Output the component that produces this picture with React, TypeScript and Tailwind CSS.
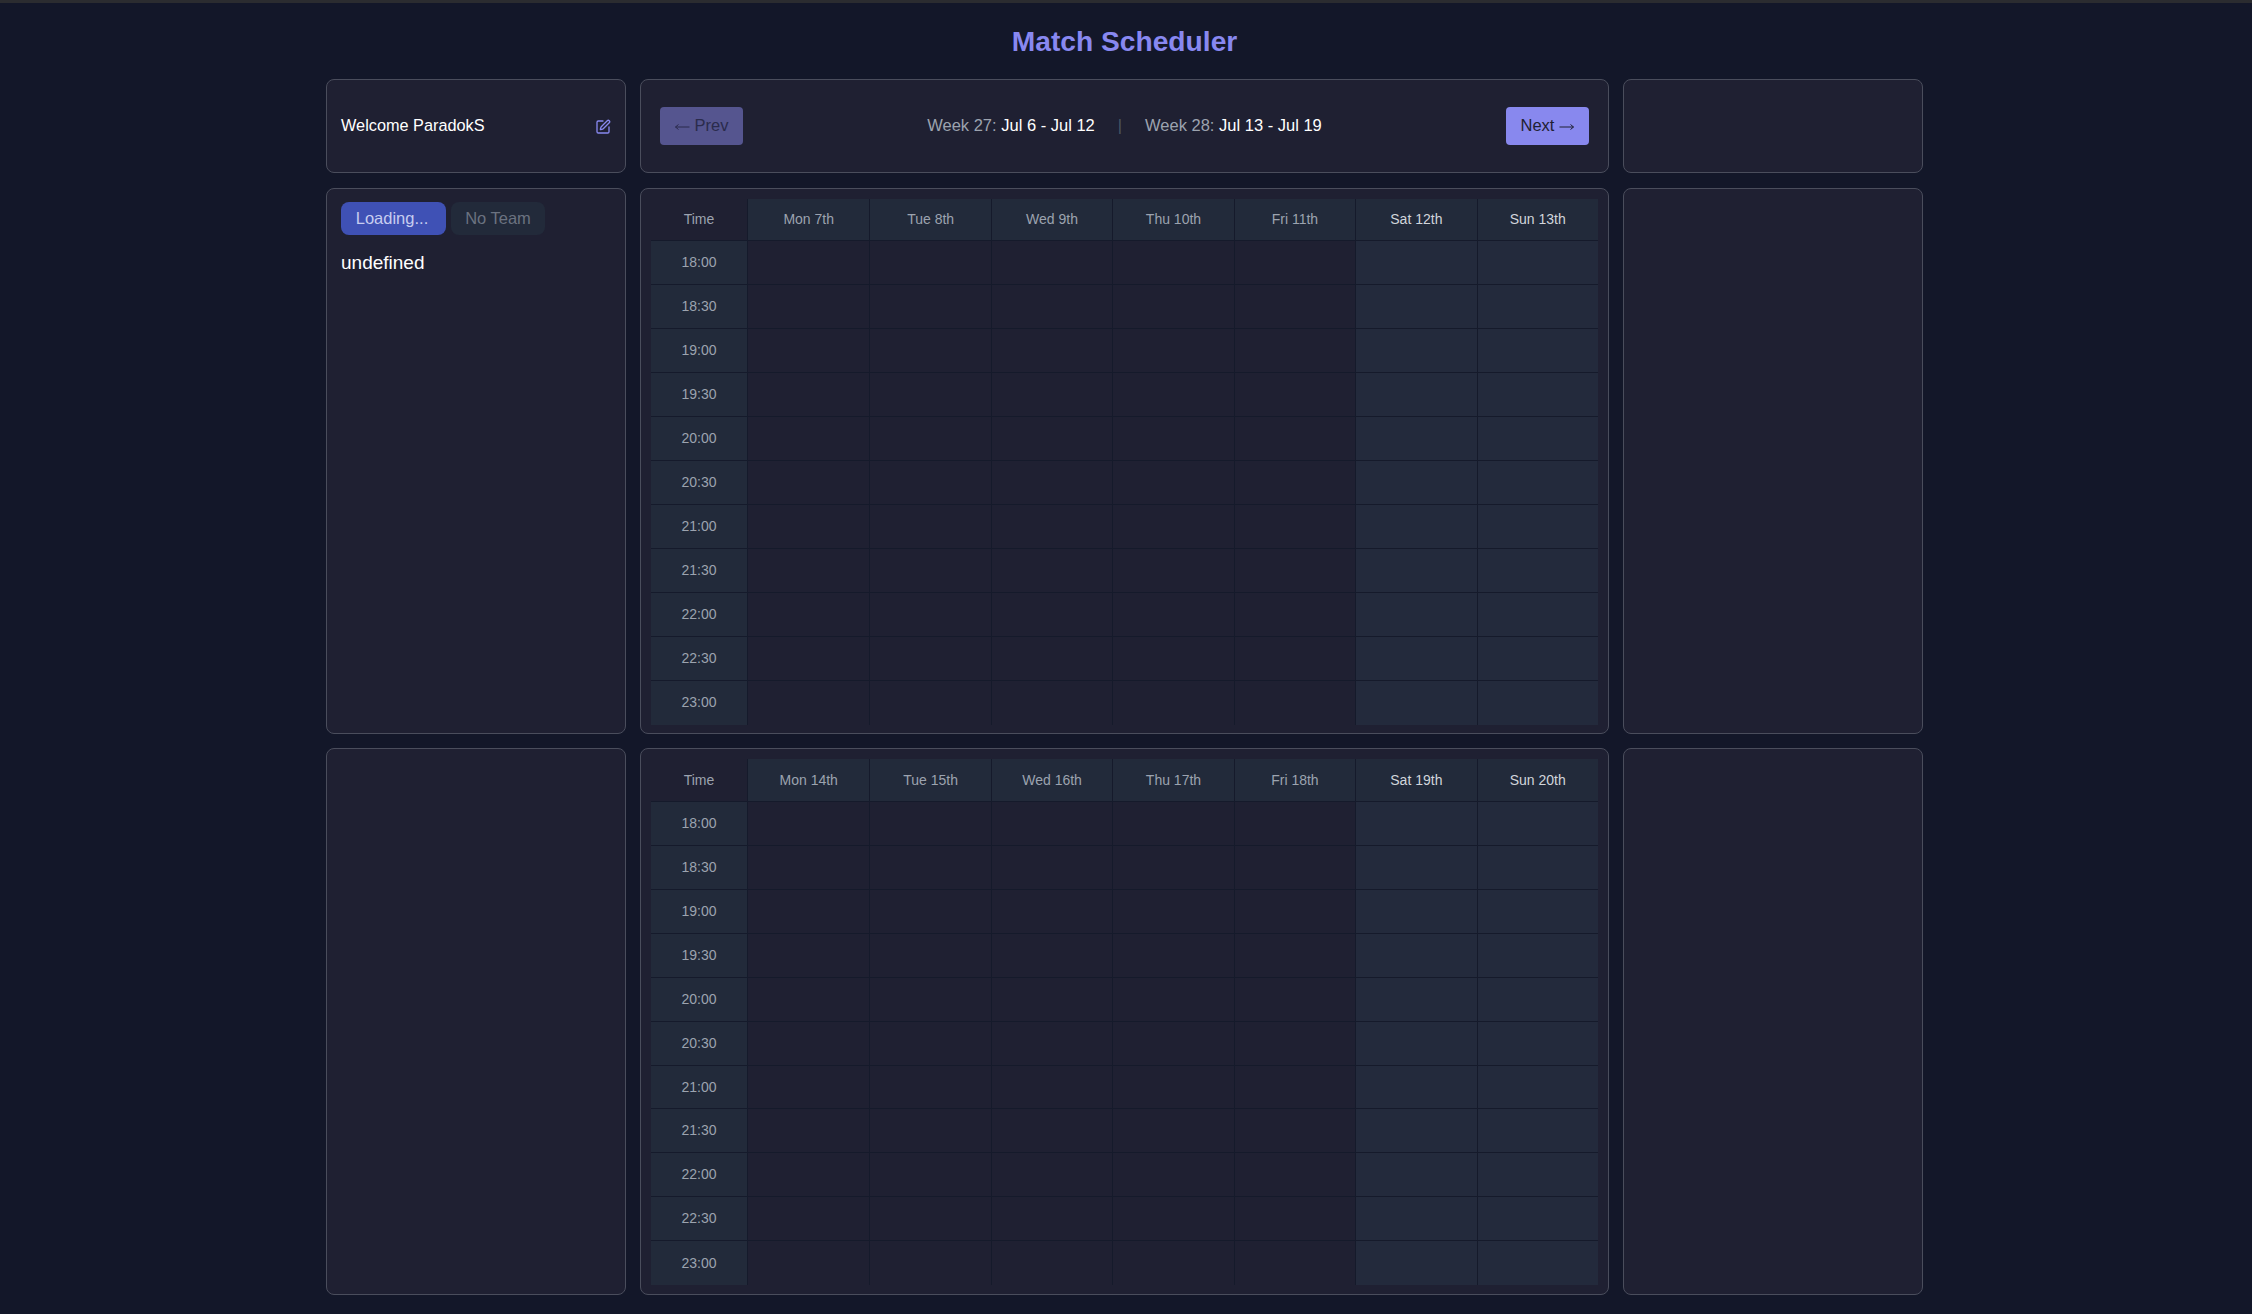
import { SquarePen } from 'lucide-react';

const TIMES = ['18:00', '18:30', '19:00', '19:30', '20:00', '20:30', '21:00', '21:30', '22:00', '22:30', '23:00'];

const WEEK_27 = ['Mon 7th', 'Tue 8th', 'Wed 9th', 'Thu 10th', 'Fri 11th', 'Sat 12th', 'Sun 13th'];
const WEEK_28 = ['Mon 14th', 'Tue 15th', 'Wed 16th', 'Thu 17th', 'Fri 18th', 'Sat 19th', 'Sun 20th'];

function Card({ className = '', children }: { className?: string; children?: React.ReactNode }) {
  return <div className={`rounded-lg border border-[#4a4d5c] bg-[#1f2032] ${className}`}>{children}</div>;
}

function WeekGrid({ days, rows }: { days: string[]; rows: string }) {
  return (
    <div className={`grid h-[526px] grid-cols-[97px_repeat(7,1fr)] text-[14px] ${rows}`}>
      <div className="flex items-center justify-center border-r border-b border-[#151a2b] text-[#9ca3af]">Time</div>
      {days.map((day, i) => (
        <div
          key={day}
          className={`flex items-center justify-center border-b border-[#151a2b] bg-[#222a3a] ${i > 0 ? 'border-l' : ''} ${
            i >= 5 ? 'text-[#d1d5db]' : 'text-[#9ca3af]'
          }`}
        >
          {day}
        </div>
      ))}
      {TIMES.map((time, row) => (
        <div key={time} className="contents">
          <div
            className={`flex items-center justify-center border-r border-[#151a2b] bg-[#222a3a] text-[#9ca3af] ${
              row < 10 ? 'border-b' : ''
            }`}
          >
            {time}
          </div>
          {days.map((day, i) => (
            <div
              key={day}
              className={`border-[#151a2b] ${i >= 5 ? 'bg-[#232a3c]' : ''} ${i > 0 ? 'border-l' : ''} ${
                row < 10 ? 'border-b' : ''
              }`}
            />
          ))}
        </div>
      ))}
    </div>
  );
}

function Arrow({ flip = false }: { flip?: boolean }) {
  return (
    <svg
      width="15"
      height="8"
      viewBox="0 0 15 8"
      fill="none"
      stroke="currentColor"
      strokeWidth="1"
      className={`mt-[3px] ${flip ? 'rotate-180' : ''}`}
    >
      <path d="M0.5 4H14.5M11.5 1.5L14.5 4L11.5 6.5" />
    </svg>
  );
}

export default function App() {
  return (
    <div className="flex min-h-[1314px] flex-col border-t-[3px] border-[#2b2c30] bg-[#131729] font-['Liberation_Sans',Arial,sans-serif]">
      <h1 className="py-[22px] pr-[3px] text-center text-[28.2px] leading-[32px] font-bold text-[#8888f0]">
        Match Scheduler
      </h1>

      <div className="ml-[326px] grid w-[1597px] grid-cols-[300px_969px_300px] grid-rows-[94px_546px_547px] gap-x-[14px] gap-y-[14.5px]">
        <Card className="flex items-center justify-between px-[14px]">
          <span className="pb-[2px] text-[16.3px] text-white">Welcome ParadokS</span>
          <SquarePen className="mt-0.5 h-4 w-4 text-[#8888f0]" />
        </Card>

        <Card className="flex items-center justify-between px-[19px]">
          <button
            type="button"
            className="flex h-[38px] w-[83px] items-center justify-center gap-[5px] rounded bg-[#55558f] pb-[2px] text-[16.5px] text-[#2a2b4c]"
          >
            <Arrow flip />
            Prev
          </button>
          <div className="flex items-center pb-[2px] text-[16.5px] text-[#9ca3af]">
            <span>
              Week 27: <span className="text-white">Jul 6 - Jul 12</span>
            </span>
            <span className="mx-[23px] text-[#4b5563]">|</span>
            <span>
              Week 28: <span className="text-white">Jul 13 - Jul 19</span>
            </span>
          </div>
          <button
            type="button"
            className="flex h-[38px] w-[83px] items-center justify-center gap-[5px] rounded bg-[#8888ee] pb-[2px] text-[16.5px] text-[#1f2032]"
          >
            Next
            <Arrow />
          </button>
        </Card>

        <Card />

        <Card className="px-[14px] pt-[13.5px]">
          <div className="flex gap-[5px]">
            <button
              type="button"
              className="h-[33px] w-[105px] rounded-lg bg-[#3f51b5] pr-[3px] text-[16.5px] text-[#c7cdf0]"
            >
              Loading...
            </button>
            <button type="button" className="h-[33px] w-[94px] rounded-lg bg-[#222a3a] text-[16.5px] text-[#6b7280]">
              No Team
            </button>
          </div>
          <div className="mt-[14px] text-[19px] text-white">undefined</div>
        </Card>

        <Card className="px-[10px] pt-[10px]">
          <WeekGrid days={WEEK_27} rows="grid-rows-[42.4px_repeat(11,1fr)]" />
        </Card>

        <Card />

        <Card />

        <Card className="px-[10px] pt-[10px]">
          <WeekGrid days={WEEK_28} rows="grid-rows-[43.3px_repeat(11,1fr)]" />
        </Card>

        <Card />
      </div>
    </div>
  );
}
